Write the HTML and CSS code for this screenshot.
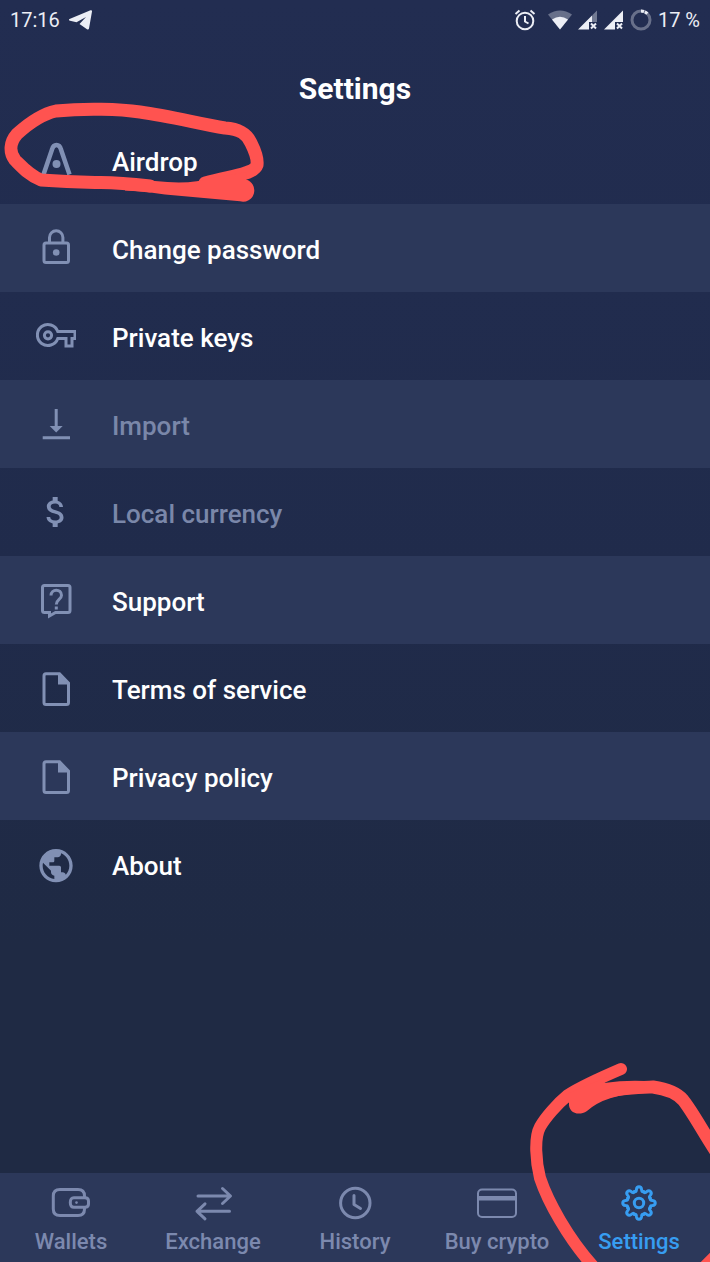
FILE: index.html
```
<!DOCTYPE html>
<html lang="en">
  <head>
    <meta charset="UTF-8" />
    <meta name="viewport" content="width=device-width, initial-scale=1.0" />
    <title>Settings</title>
    <link rel="stylesheet" href="styles.css">
  </head>
  <body>
    <div class="status-bar">
      <span>17:16</span>
      <svg class="telegram" width="24" height="20" viewBox="0 0 24 20">
        <path d="M.5 9 21.500.300Q23.200-.2 23 1.500L20 18.500Q19.600 20.200 18 19.300L10.500 14 17 7 7.500 12.200 1 10.800Q-.8 10 .5 9z" fill="currentColor" />
      </svg>
      <div class="status-icons">
        <svg class="alarm" width="22" height="22" viewBox="0 0 22 22" fill="none" stroke="currentColor" stroke-width="2">
          <circle cx="11" cy="12" r="8.300" />
          <path d="M11 7v5.500l3.500 2M1.500 5l4-3.500M20.500 5l-4-3.500" />
        </svg>
        <svg width="24" height="20" viewBox="0 0 24 20" fill="currentColor">
          <path d="M0 4.500Q12-3.500 24 4.500L12 19.500z" opacity=".35" />
          <path d="M4 9.500Q12 4 20 9.500L12 19.500z" />
        </svg>
        <svg width="20" height="20" viewBox="0 0 20 20" fill="currentColor">
          <path d="M14 5.500 19 .500V12H14z" opacity=".4" />
          <path d="M0 19.500 14 5.500V12H11v7.500z" />
          <path d="m13 13.500 5 5m0-5-5 5" stroke="currentColor" stroke-width="2" />
        </svg>
        <svg width="20" height="20" viewBox="0 0 20 20" fill="currentColor">
          <path d="M0 19.500 19 .500V12H11v7.500z" />
          <path d="m13 13.500 5 5m0-5-5 5" stroke="currentColor" stroke-width="2" />
        </svg>
        <svg width="22" height="22" viewBox="0 0 22 22" fill="none" stroke="currentColor" stroke-width="3">
          <circle cx="11" cy="11" r="9" opacity=".35" />
          <path d="M11 2a9 9 0 0 1 6.500 2.800" stroke-dasharray="3 1" />
        </svg>
        <span>17 %</span>
      </div>
    </div>

    <h1>Settings</h1>

    <main class="menu">
      <button class="menu-item">
        <svg class="icon" viewBox="0 0 40 40">
          <path d="M7.500 34.500 16 9.500C17.500 3.500 23.500 3.500 25 9.500L33.500 34.500" stroke-width="4.500" />
          <circle class="solid" cx="20.500" cy="24" r="4" />
        </svg>
        <span class="label">Airdrop</span>
      </button>
      <button class="menu-item">
        <svg class="icon" viewBox="0 0 40 40">
          <rect x="8" y="15" width="24.500" height="19.500" rx="2" />
          <path d="M13.500 15V9.500a6.700 6.700 0 0 1 13.400 0V15" />
          <circle class="solid" cx="20.200" cy="24.500" r="3.300" />
        </svg>
        <span class="label">Change password</span>
      </button>
      <button class="menu-item">
        <svg class="icon" viewBox="0 0 40 40">
          <path d="M21.800 15.500H39V22.500H36v7.500H30V22.500H21.800A10.500 10.500 0 1 1 21.800 15.500z" />
          <circle cx="12" cy="19.300" r="3.600" />
        </svg>
        <span class="label">Private keys</span>
      </button>
      <button class="menu-item" disabled>
        <svg class="icon" viewBox="0 0 40 40">
          <path d="M20.200 5V24M6.700 33.700H34" />
          <path class="solid" d="M13.700 22h13l-6.500 6.500z" />
        </svg>
        <span class="label">Import</span>
      </button>
      <button class="menu-item" disabled>
        <svg class="icon" viewBox="0 0 24 24">
          <path class="solid" d="M11.800 10.900c-2.270-.59-3-1.200-3-2.150 0-1.090 1.010-1.850 2.700-1.850 1.780 0 2.440.85 2.500 2.100h2.210c-.07-1.720-1.120-3.300-3.210-3.810V3h-3v2.160c-1.940.42-3.500 1.680-3.500 3.610 0 2.310 1.910 3.460 4.700 4.130 2.500.6 3 1.480 3 2.410 0 .69-.49 1.790-2.700 1.790-2.060 0-2.870-.92-2.980-2.100h-2.200c.12 2.190 1.760 3.420 3.680 3.830V21h3v-2.150c1.950-.37 3.500-1.500 3.500-3.550 0-2.840-2.430-3.810-4.700-4.400z" />
        </svg>
        <span class="label">Local currency</span>
      </button>
      <button class="menu-item">
        <svg class="icon" viewBox="0 0 40 40">
          <path d="M8.500 5.500H32Q34 5.500 34 7.500V30.500Q34 32.500 32 32.500H19.500L13.500 36V32.500H8.500Q6.500 32.500 6.500 30.500V7.500Q6.500 5.500 8.500 5.500z" />
          <path d="M15 15.500C15 8.500 25.500 8.500 25.500 15.300 25.500 19.500 20.300 19.500 20.300 24.500M20.300 26.500v3" />
        </svg>
        <span class="label">Support</span>
      </button>
      <button class="menu-item">
        <svg class="icon" viewBox="0 0 40 40">
          <path d="M10 5.800H23.500L32.500 15V34.500Q32.500 36.500 30.500 36.500H10Q8 36.500 8 34.500V7.800Q8 5.800 10 5.800z" />
          <path class="solid" d="M22 5v11.500h11z" />
        </svg>
        <span class="label">Terms of service</span>
      </button>
      <button class="menu-item">
        <svg class="icon" viewBox="0 0 40 40">
          <path d="M10 5.800H23.500L32.500 15V34.500Q32.500 36.500 30.500 36.500H10Q8 36.500 8 34.500V7.800Q8 5.800 10 5.800z" />
          <path class="solid" d="M22 5v11.500h11z" />
        </svg>
        <span class="label">Privacy policy</span>
      </button>
      <button class="menu-item">
        <svg class="icon" viewBox="0 -1 24 24">
          <path class="solid" d="M12 2C6.480 2 2 6.480 2 12s4.480 10 10 10 10-4.480 10-10S17.520 2 12 2zm-1 17.930c-3.950-.49-7-3.850-7-7.930 0-.62.08-1.210.21-1.790L9 15v1c0 1.100.9 2 2 2v1.930zm6.900-2.540c-.26-.81-1-1.390-1.900-1.390h-1v-3c0-.55-.45-1-1-1H8v-2h2c.55 0 1-.45 1-1V7h2c1.100 0 2-.9 2-2v-.41c2.930 1.190 5 4.060 5 7.410 0 2.080-.8 3.970-2.100 5.390z" />
        </svg>
        <span class="label">About</span>
      </button>
    </main>

    <nav class="tabs">
      <a class="tab" href="#wallets">
        <svg class="icon" viewBox="0 0 40 40">
          <path d="M33.500 14V13Q33.500 6.500 27 6.500H9Q2.300 6.500 2.300 13V26Q2.300 32.500 9 32.500H27Q33.500 32.500 33.500 26V24.500" />
          <path d="M23 14.800H34Q37.500 14.800 37.500 18V21Q37.500 24.300 34 24.300H23Q19.300 24.300 19.300 19.500T23 14.800z" />
          <circle class="solid" cx="25.500" cy="19.600" r="1.300" />
        </svg>
        Wallets
      </a>
      <a class="tab" href="#exchange">
        <svg class="icon round" viewBox="0 0 40 40">
          <path d="M5 13H37M29.500 5.500l8 7.500-8 7.500M36.500 28.300H4M12 20.800 4 28.300l8 7.500" />
        </svg>
        Exchange
      </a>
      <a class="tab" href="#history">
        <svg class="icon round" viewBox="0 0 40 40">
          <circle cx="20.300" cy="20" r="14.700" />
          <path d="M19 12.500V21.500L25.500 25.500" />
        </svg>
        History
      </a>
      <a class="tab" href="#buy">
        <svg class="icon" viewBox="0 0 40 40">
          <rect x="1" y="6.500" width="38" height="27.500" rx="4" stroke-width="2" />
          <path d="M1 15.300H39" stroke-width="4.500" />
        </svg>
        Buy crypto
      </a>
      <a class="tab active" href="#settings">
        <svg class="icon round" viewBox="-20 -20 40 40">
          <defs>
            <path id="tooth" d="M-4.700-11.300C-3-10.800-2.700-12-2.600-13.400-2.200-17.200 2.200-17.200 2.600-13.400 2.700-12 3-10.800 4.700-11.300" />
          </defs>
          <use href="#tooth" />
          <use href="#tooth" transform="rotate(45)" />
          <use href="#tooth" transform="rotate(90)" />
          <use href="#tooth" transform="rotate(135)" />
          <use href="#tooth" transform="rotate(180)" />
          <use href="#tooth" transform="rotate(225)" />
          <use href="#tooth" transform="rotate(270)" />
          <use href="#tooth" transform="rotate(315)" />
          <circle r="4.700" />
        </svg>
        Settings
      </a>
    </nav>

    <!-- hand drawn marks -->
    <svg class="mark mark-airdrop" width="280" height="115" viewBox="0 95 280 115">
      <path d="M150 186C125 183 110 182 95 182.500 75 182 55 181 41 180 30 176 22 167 15 160 9 152 10 142 17 134 28 124 42 114 56 111 85 108 120 109 140 112 170 116 200 124 225 128 240 129 247 134 251 143 255 151 258 158 257 165 254 174 235 175 205 183" stroke-width="13" />
      <path class="fill" d="M125 178 155 181Q190 185 212 178L247 172 246 179.500A10.800 10.800 0 0 1 240 201.300L165 194.500Q145 191 125 190.500z" />
    </svg>
    <svg class="mark mark-settings" width="190" height="207" viewBox="520 1055 190 207">
      <path d="M621 1069C600 1078 582 1086 568 1095 557 1104 545 1118 540 1127 534 1138 536 1162 540 1178 548 1202 568 1238 593 1266" />
      <path d="M580 1104C605 1088 625 1088 653 1087 667 1089 677 1093 683 1100 692 1111 702 1130 715 1150M700 1272 720 1252" stroke-width="13" />
      <path class="fill" d="M565 1095 607 1077Q606 1082 604 1083 625 1080 645 1081V1093Q606 1094 587 1111C578 1117 568 1112 569 1103z" />
    </svg>
  </body>
</html>
```

FILE: styles.css
```
* {
  box-sizing: border-box;
}
body {
  position: relative;
  display: flex;
  flex-direction: column;
  min-height: 100vh;
  margin: 0;
  background: linear-gradient(#222d51, #202b4b 45%, #1f2a44 75%);
  color: #fff;
  font-family: Roboto, sans-serif;
}
.status-bar {
  display: flex;
  align-items: center;
  height: 40px;
  padding: 0 10px;
  font-size: 20px;
  color: #eceef5;
}
.telegram {
  margin-left: 9px;
}
.status-icons {
  display: flex;
  align-items: center;
  gap: 6px;
  margin-left: auto;
}
.alarm {
  margin-right: 6px;
}
h1 {
  margin: 0;
  padding: 33px 0 11px;
  font-size: 30px;
  font-weight: 700;
  line-height: 32px;
  text-align: center;
}
.menu {
  flex: 1;
}
.menu-item {
  display: flex;
  align-items: center;
  gap: 36px;
  width: 100%;
  height: 88px;
  padding: 0 36px;
  border: none;
  background: none;
  color: #fff;
  font-family: inherit;
  font-size: 26px;
  font-weight: 500;
  text-align: left;
  cursor: pointer;
}
.menu-item:nth-child(even) {
  background-color: #2c385a;
}
.menu-item:disabled {
  color: #7a87a9;
  cursor: default;
}
.label {
  padding-top: 4px;
}
.icon {
  flex: none;
  width: 40px;
  height: 40px;
  fill: none;
  stroke: currentColor;
  stroke-width: 3;
}
.menu-item .icon {
  color: #8190b4;
}
.icon .solid {
  fill: currentColor;
  stroke: none;
}
.round {
  stroke-linecap: round;
  stroke-linejoin: round;
}
.tabs {
  display: grid;
  grid-template-columns: repeat(5, 1fr);
  background-color: #2c385a;
}
.tab {
  display: flex;
  flex-direction: column;
  align-items: center;
  gap: 5px;
  padding: 10px 0 6px;
  color: #7c89ae;
  font-size: 22px;
  font-weight: 500;
  line-height: 28px;
  text-decoration: none;
  white-space: nowrap;
}
.tab.active {
  color: #379df1;
}
.mark {
  position: absolute;
  fill: none;
  stroke: #ff5350;
  stroke-width: 12;
  stroke-linecap: round;
  stroke-linejoin: round;
  pointer-events: none;
}
.mark .fill {
  fill: #ff5350;
  stroke: none;
}
.mark-airdrop {
  top: 95px;
  left: 0;
}
.mark-settings {
  right: 0;
  bottom: 0;
}
```
